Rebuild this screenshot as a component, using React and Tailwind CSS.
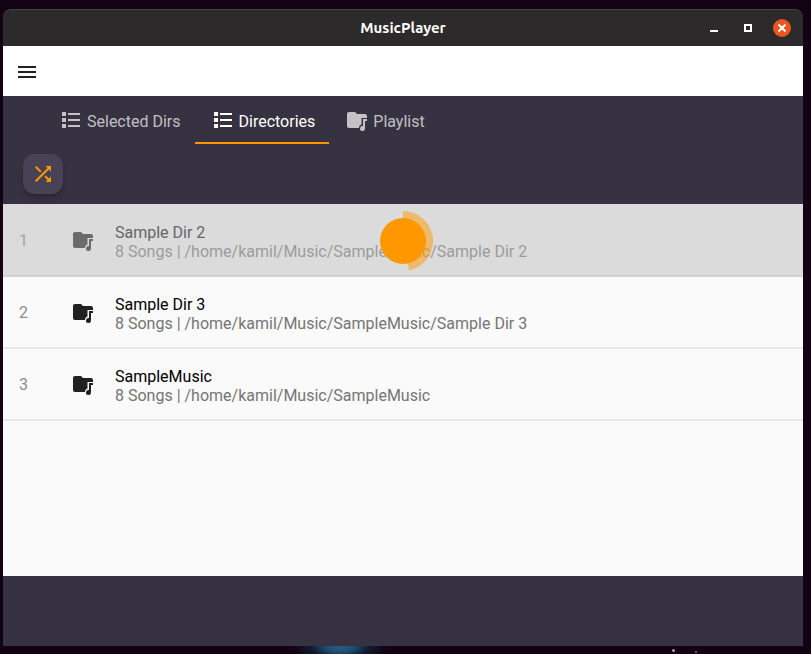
import React from "react";

function ListIcon() {
  return (
    <svg className="size-6 shrink-0" viewBox="0 0 24 24" fill="currentColor" aria-hidden="true">
      <path d="M3 4h4v4H3zM9 5h12v2H9zM3 10h4v4H3zM9 11h12v2H9zM3 16h4v4H3zM9 17h12v2H9z" />
    </svg>
  );
}

function FolderMusicIcon() {
  return (
    <svg className="size-6 shrink-0" viewBox="0 0 24 24" fill="currentColor" aria-hidden="true">
      <path d="M10 4H4C2.9 4 2 4.9 2 6v12c0 1.1.9 2 2 2h10c0-2 1-3.2 2.5-3.6V10H22V8c0-1.1-.9-2-2-2h-8z" />
      <path d="M18 11h4v2h-2v7.5a2.5 2.5 0 1 1-2-2.45z" />
    </svg>
  );
}

const tabs = [
  { label: "Selected Dirs", Icon: ListIcon },
  { label: "Directories", Icon: ListIcon, active: true },
  { label: "Playlist", Icon: FolderMusicIcon },
];

const directories = [
  { name: "Sample Dir 2", detail: "8 Songs | /home/kamil/Music/SampleMusic/Sample Dir 2", busy: true },
  { name: "Sample Dir 3", detail: "8 Songs | /home/kamil/Music/SampleMusic/Sample Dir 3" },
  { name: "SampleMusic", detail: "8 Songs | /home/kamil/Music/SampleMusic" },
];

function TitleBar() {
  return (
    <header className="grid h-[37px] shrink-0 grid-cols-[1fr_auto_1fr] items-center rounded-t-lg border-t border-[#454344] bg-[#2c2a2b] text-white">
      <h1 className="col-start-2 font-['Ubuntu','Noto_Sans',sans-serif] text-[15px] font-bold">MusicPlayer</h1>
      <div className="flex items-center justify-end gap-4 pr-3">
        <button type="button" aria-label="Minimize" className="flex size-[18px] items-center justify-center">
          <svg className="size-[18px]" viewBox="0 0 18 18" fill="currentColor"><path d="M5 11h8v2H5z" /></svg>
        </button>
        <button type="button" aria-label="Maximize" className="flex size-[18px] items-center justify-center">
          <svg className="size-[18px]" viewBox="0 0 18 18" fill="none" stroke="currentColor" strokeWidth="2"><path d="M6 6h6v6H6z" /></svg>
        </button>
        <button type="button" aria-label="Close" className="flex size-[18px] items-center justify-center rounded-full bg-[#e95420]">
          <svg className="size-[18px]" viewBox="0 0 18 18" fill="none" stroke="currentColor" strokeWidth="2"><path d="M5.5 5.5l7 7M12.5 5.5l-7 7" /></svg>
        </button>
      </div>
    </header>
  );
}

function BusyIndicator() {
  return (
    <div className="pointer-events-none absolute inset-0 flex items-center justify-center" role="status" aria-label="Loading">
      <svg className="size-[60px]" viewBox="0 0 60 60">
        <path d="M30 0A30 30 0 0 1 36 59.4L30 30z" fill="#ff9800" fillOpacity=".5" />
        <circle cx="30" cy="30" r="23" fill="#ff9800" />
      </svg>
    </div>
  );
}

export default function App() {
  return (
    <div className="relative flex h-screen flex-col overflow-hidden bg-[#120213] pt-[9px] pr-2 pb-2 pl-[3px] font-[Roboto,sans-serif]">
      <div className="absolute bottom-0 left-[36%] h-2 w-24 bg-[radial-gradient(ellipse_48px_16px_at_50%_20%,#286086_0%,#1f4c6e_30%,#111a2e_60%,transparent_100%)]" />
      <div className="absolute right-[136px] bottom-[2px] size-[3px] rounded-full bg-[#a8a0aa]" />
      <div className="absolute right-[114px] bottom-px size-[2px] rounded-full bg-[#77707a]" />
      <div className="relative flex min-h-0 flex-1 flex-col">
        <TitleBar />
        <div className="flex h-[50px] shrink-0 items-center bg-white px-3">
          <button type="button" aria-label="Open menu" className="text-[#212121]">
            <svg className="block size-6" viewBox="0 0 24 24" fill="currentColor">
              <path d="M3 7h18v2H3zM3 12h18v2H3zM3 17h18v2H3z" />
            </svg>
          </button>
        </div>
        <div className="shrink-0 bg-[#363241]">
          <nav className="flex h-12 px-10" role="tablist">
            {tabs.map(({ label, Icon, active }) => (
              <button
                key={label}
                type="button"
                role="tab"
                aria-selected={!!active}
                className={`flex items-center gap-1 border-b-2 pt-0.5 pr-[14px] pl-4 text-base ${
                  active ? "border-[#ff9800] text-white" : "border-transparent text-white/70"
                }`}
              >
                <Icon />
                <span className="pt-1">{label}</span>
              </button>
            ))}
          </nav>
          <div className="px-5 py-[10px]">
            <button
              type="button"
              aria-label="Shuffle"
              className="flex size-10 items-center justify-center rounded-xl bg-[#484256] text-[#ff9800] shadow-md shadow-black/20"
            >
              <svg className="size-6" viewBox="0 0 24 24" fill="currentColor">
                <path d="M10.59 9.17L5.41 4 4 5.41l5.17 5.17 1.42-1.41zM14.5 4l2.04 2.04L4 18.59 5.41 20 17.96 7.46 20 9.5V4h-5.5zm.33 9.41l-1.41 1.41 3.13 3.13L14.5 20H20v-5.5l-2.04 2.04-3.13-3.13z" />
              </svg>
            </button>
          </div>
        </div>
        <main className="min-h-0 flex-1 border-t border-[#dbdbdb] bg-[#fafafa]">
          <ol>
            {directories.map(({ name, detail, busy }, index) => (
              <li
                key={name}
                className={`relative h-[72px] ${busy ? "bg-[#dbdbdb]" : ""}`}
              >
                <div className={`flex h-full items-center border-b-2 px-4 ${busy ? "border-[#d2d2d2]" : "border-[#e8e8e8]"}`}>
                  <span className={`w-[52px] pt-0.5 ${busy ? "text-[#a2a2a2]" : "text-[#8c8c8c]"}`}>{index + 1}</span>
                  <span className={busy ? "text-[#6b6b6b]" : "text-[#212121]"}>
                    <FolderMusicIcon />
                  </span>
                  <div className="ml-5 pt-1 leading-[19px]">
                    <p className={busy ? "text-[#666666]" : "text-black"}>{name}</p>
                    <p className={busy ? "text-[#9b9b9b]" : "text-[#757575]"}>{detail}</p>
                  </div>
                </div>
                {busy && <BusyIndicator />}
              </li>
            ))}
          </ol>
        </main>
        <footer className="h-[70px] shrink-0 bg-[#363241]" />
      </div>
    </div>
  );
}
